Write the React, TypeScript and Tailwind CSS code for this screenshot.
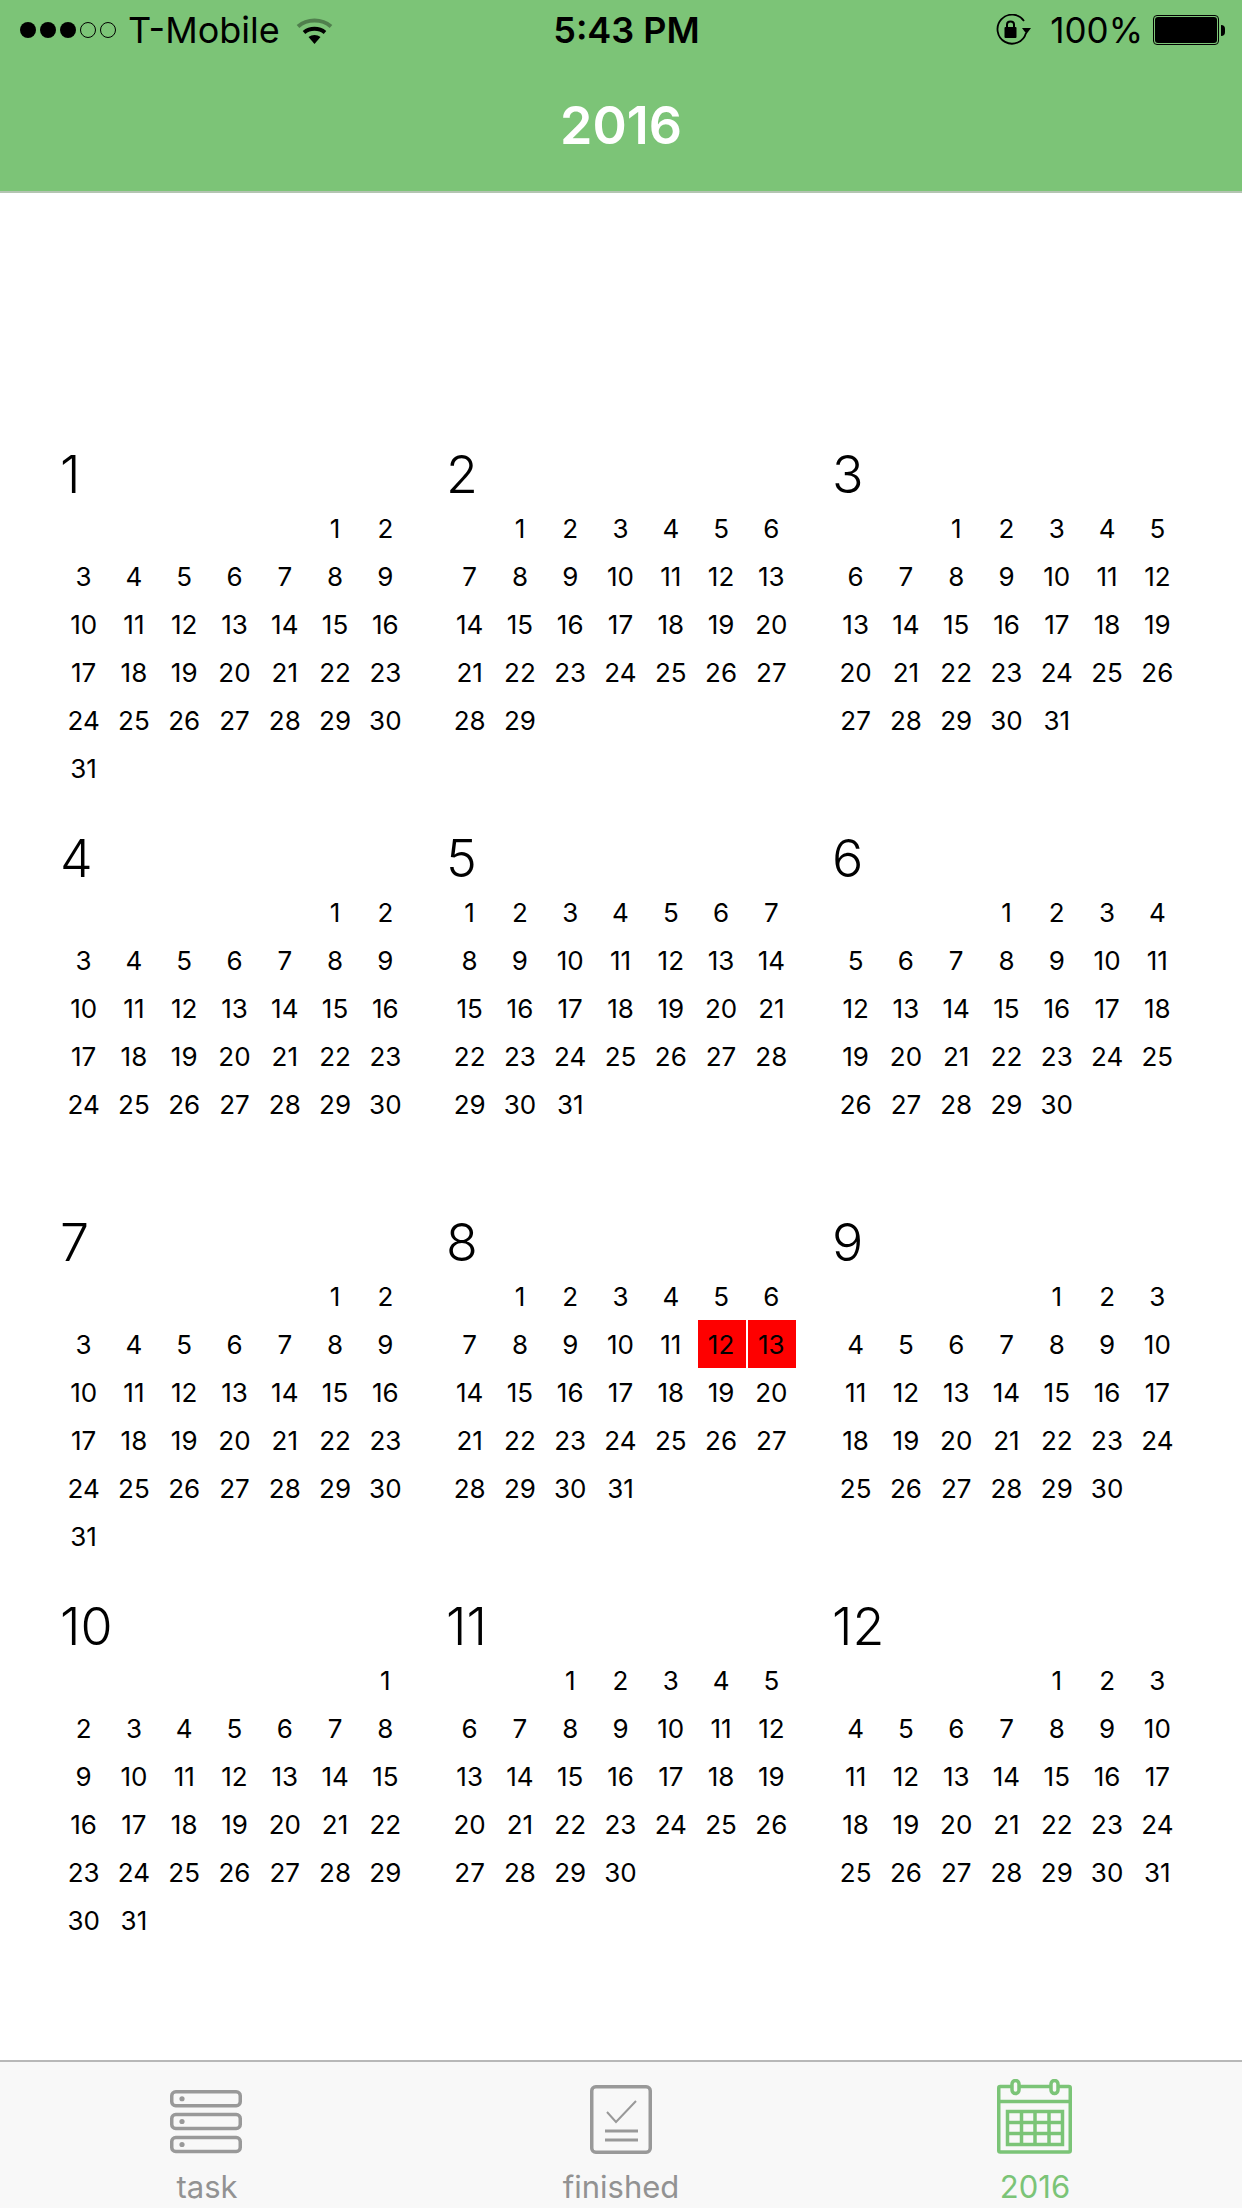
const months = [
  { name: 1, start: 5, days: 31 },
  { name: 2, start: 1, days: 29 },
  { name: 3, start: 2, days: 31 },
  { name: 4, start: 5, days: 30 },
  { name: 5, start: 0, days: 31 },
  { name: 6, start: 3, days: 30 },
  { name: 7, start: 5, days: 31 },
  { name: 8, start: 1, days: 31 },
  { name: 9, start: 4, days: 30 },
  { name: 10, start: 6, days: 31 },
  { name: 11, start: 2, days: 30 },
  { name: 12, start: 4, days: 31 },
];

function Dots() {
  return (
    <div className="flex items-center gap-[4px]">
      {[0, 1, 2].map((i) => (
        <span key={i} className="w-[16px] h-[16px] rounded-full bg-black" />
      ))}
      {[3, 4].map((i) => (
        <span key={i} className="w-[16px] h-[16px] rounded-full border border-black" />
      ))}
    </div>
  );
}

function Wifi() {
  return (
    <svg width="37" height="27" viewBox="0 0 37 27" fill="none">
      <path d="M2 9.5C11 1.5 26 1.5 35 9.5" stroke="#000" strokeOpacity="0.35" strokeWidth="4" />
      <path d="M8 15.5C14 10.5 23 10.500 29 15.500" stroke="#000" strokeWidth="4" />
      <path d="M12.500 20L18.500 27L24.500 20C21 17.300 16 17.300 12.500 20Z" fill="#000" />
    </svg>
  );
}

function RotationLock() {
  return (
    <svg width="36" height="32" viewBox="0 0 36 32" fill="none">
      <path d="M31 19A14.500 14.500 0 1 1 29 7" stroke="#000" strokeWidth="1.800" />
      <path d="M27 14H36L31.500 20Z" fill="#000" />
      <rect x="9.500" y="13" width="12" height="11" rx="1" fill="#000" />
      <path d="M12 13V10.500C12 6.500 19 6.500 19 10.500V13" stroke="#000" strokeWidth="2" />
    </svg>
  );
}

function Battery() {
  return (
    <div className="flex items-center gap-[2px]">
      <div className="w-[66px] h-[30px] rounded-[4px] border border-black p-[1px]">
        <div className="w-full h-full rounded-[3px] bg-black" />
      </div>
      <div className="w-[4px] h-[11px] rounded-r-full bg-black" />
    </div>
  );
}

function TaskIcon() {
  return (
    <svg width="72" height="64" viewBox="0 0 72 64" fill="none" stroke="#999" strokeWidth="3.500">
      <rect x="1.750" y="1.750" width="68.500" height="14" rx="4" />
      <rect x="1.750" y="24.500" width="68.500" height="14" rx="4" />
      <rect x="1.750" y="47.500" width="68.500" height="14" rx="4" />
      <circle cx="12" cy="8.750" r="2.600" fill="#999" stroke="none" />
      <circle cx="12" cy="31.500" r="2.600" fill="#999" stroke="none" />
      <circle cx="12" cy="54.500" r="2.600" fill="#999" stroke="none" />
    </svg>
  );
}

function FinishedIcon() {
  return (
    <svg width="62" height="69" viewBox="0 0 62 69" fill="none" stroke="#999">
      <rect x="1.750" y="1.750" width="58.500" height="65.500" rx="4" strokeWidth="3.500" />
      <path d="M17 27L26 37L46 16" strokeWidth="2" />
      <path d="M15 46H48M15 55H48" strokeWidth="3" />
    </svg>
  );
}

function CalendarIcon() {
  return (
    <svg width="75" height="75" viewBox="0 0 75 75" fill="none" stroke="#7bc477">
      <rect x="1.750" y="7.500" width="71.500" height="65.500" rx="1.500" strokeWidth="3.500" />
      <path d="M1.500 22.500H73.500" strokeWidth="3.500" />
      <rect x="15" y="1.500" width="7" height="13" rx="3.500" fill="#f8f8f8" strokeWidth="3.500" />
      <rect x="54" y="1.500" width="7" height="13" rx="3.500" fill="#f8f8f8" strokeWidth="3.500" />
      <rect x="10.500" y="32.500" width="55" height="33" strokeWidth="3.500" />
      <path d="M24.500 32.500V65.500M38 32.500V65.500M52 32.500V65.500M10.500 43.500H65.500M10.500 54.500H65.500" strokeWidth="3.500" />
    </svg>
  );
}

function Month({ name, start, days }: { name: number; start: number; days: number }) {
  return (
    <div className="h-[384px]">
      <div className="h-[59px] pl-[1px] pt-[1px] flex items-center text-[52px] font-light leading-none text-black">{name}</div>
      <div className="w-[352px] grid grid-cols-7">
        {Array.from({ length: start }).map((_, i) => (
          <div key={"blank" + i} className="h-[48px]" />
        ))}
        {Array.from({ length: days }).map((_, i) => {
          const today = name === 8 && (i === 11 || i === 12);
          return (
            <div key={i} className="h-[48px] flex justify-center">
              <span className={"w-[48px] h-[48px] pr-[1px] flex items-center justify-center text-[26px] text-black " + (today ? "bg-[#fe0000]" : "")}>
                {i + 1}
              </span>
            </div>
          );
        })}
      </div>
    </div>
  );
}

export default function App() {
  return (
    <div className="w-[1242px] h-[2208px] bg-white flex flex-col overflow-hidden font-['Inter',sans-serif]">
      {/* header */}
      <div className="h-[193px] shrink-0 bg-[#7cc477] border-b-2 border-[#b4c4b2]">
        <div className="h-[60px] px-[20px] flex items-center justify-between text-black">
          <div className="w-[430px] flex items-center">
            <Dots />
            <span className="ml-[12px] text-[36px] leading-none">T-Mobile</span>
            <div className="ml-[16px]">
              <Wifi />
            </div>
          </div>
          <span className="ml-[8px] text-[36px] font-semibold leading-none">5:43 PM</span>
          <div className="w-[430px] flex items-center justify-end -mr-[3px]">
            <RotationLock />
            <span className="ml-[19px] mr-[10px] text-[35px] leading-none">100%</span>
            <Battery />
          </div>
        </div>
        <div className="h-[130px] pt-[2px] flex items-center justify-center text-white text-[52px] font-semibold">2016</div>
      </div>

      {/* months */}
      <div className="flex-1 pt-[252px] pl-[59px]">
        <div className="grid grid-cols-[386px_386px_386px]">
          {months.map((m) => (
            <Month key={m.name} name={m.name} start={m.start} days={m.days} />
          ))}
        </div>
      </div>

      {/* tab bar */}
      <div className="h-[148px] shrink-0 bg-[#f8f8f8] border-t-2 border-[#b8b8b8] grid grid-cols-3">
        <div className="flex flex-col items-center">
          <div className="h-[92px] mr-[2px] flex items-end"><TaskIcon /></div>
          <span className="mt-[15px] text-[31px] leading-[36px] text-[#929292]">task</span>
        </div>
        <div className="flex flex-col items-center">
          <div className="h-[92px] flex items-end"><FinishedIcon /></div>
          <span className="mt-[15px] text-[31px] leading-[36px] text-[#929292]">finished</span>
        </div>
        <div className="flex flex-col items-center">
          <div className="h-[92px] mr-[2px] flex items-end"><CalendarIcon /></div>
          <span className="mt-[15px] text-[31px] leading-[36px] text-[#7bc477]">2016</span>
        </div>
      </div>
    </div>
  );
}
